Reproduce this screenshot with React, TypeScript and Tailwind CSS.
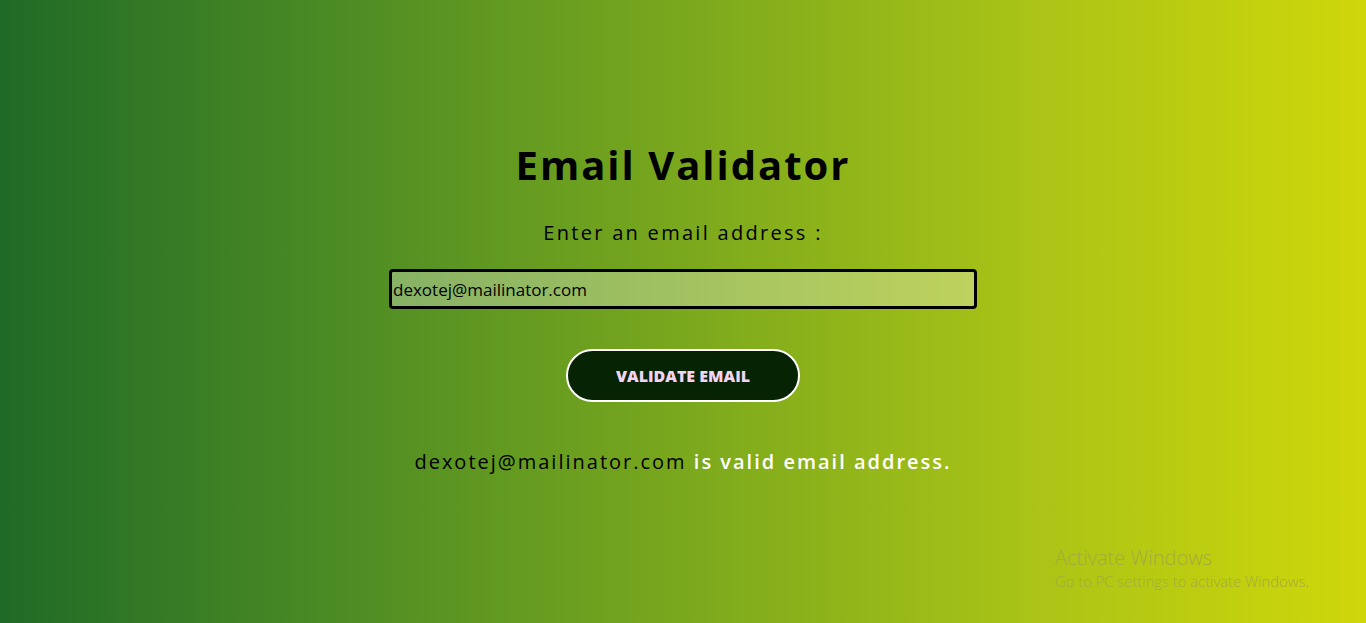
export default function App() {
  return (
    <div
      className="relative h-[623px] w-full overflow-hidden bg-[linear-gradient(to_right,#1f6a26_0%,#4d8c24_25%,#7aa81d_50%,#a9c316_75%,#cfd70a_100%)]"
      style={{ fontFamily: '"Open Sans", "Noto Sans", sans-serif' }}
    >
      <div className="flex flex-col items-center pt-[141px]">
        <h1 className="text-[40px] leading-[48px] font-bold tracking-[2px] text-black">Email Validator</h1>
        <p className="mt-[31px] text-[20px] leading-[26px] tracking-[2.3px] text-black">Enter an email address :</p>
        <input
          readOnly
          value="dexotej@mailinator.com"
          className="mt-[23px] h-[40px] w-[588px] rounded-[4px] border-[3px] border-black bg-[rgba(255,255,255,0.3)] px-[1px] text-[17px] text-black outline-none"
        />
        <button className="mt-[40px] h-[53px] w-[234px] rounded-full border-2 border-white bg-[#062303] text-[16px] font-black tracking-[0px] text-[#f3d4f6]">
          VALIDATE EMAIL
        </button>
        <p className="mt-[47px] text-[20px] leading-[26px] tracking-[2px]">
          <span className="text-black">dexotej@mailinator.com</span>{' '}
          <span className="font-semibold text-white">is valid email address.</span>
        </p>
      </div>
      <div className="absolute left-[1055px] top-[545px] text-[#a3ab3e]" style={{ fontFamily: '"Open Sans", sans-serif' }}>
        <div className="text-[20px] leading-[26px] font-light">Activate Windows</div>
        <div className="text-[14.8px] leading-[20px] font-light">Go to PC settings to activate Windows.</div>
      </div>
    </div>
  );
}
